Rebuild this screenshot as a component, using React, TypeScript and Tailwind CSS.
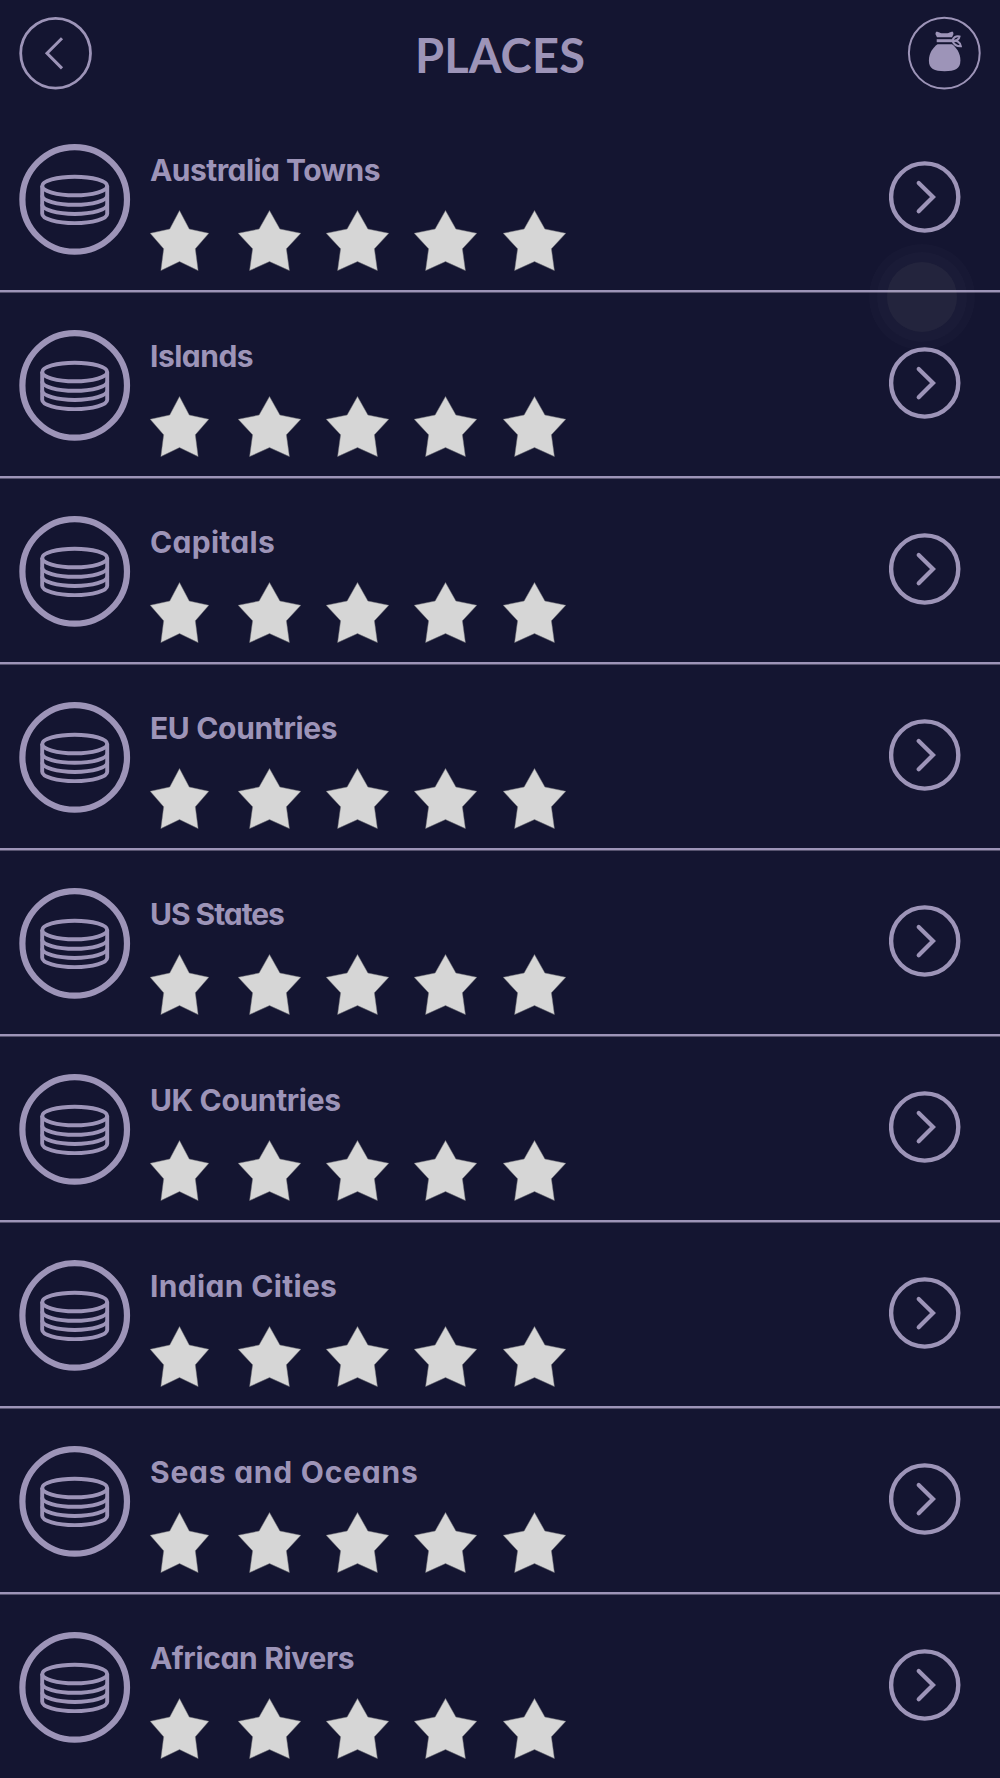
const places = [
  { name: "Australia Towns", spacing: "tracking-[-0.55px]" },
  { name: "Islands", spacing: "tracking-[-0.5px]" },
  { name: "Capitals", spacing: "tracking-[0.3px]" },
  { name: "EU Countries", spacing: "tracking-[-0.35px]" },
  { name: "US States", spacing: "tracking-[-1.05px]" },
  { name: "UK Countries", spacing: "tracking-[-0.35px]" },
  { name: "Indian Cities", spacing: "tracking-[0.33px]" },
  { name: "Seas and Oceans", spacing: "tracking-[0.77px]" },
  { name: "African Rivers", spacing: "tracking-[-0.35px]" },
];

function BackIcon() {
  return (
    <svg viewBox="0 0 74 74" className="size-[74px]" fill="none" stroke="currentColor">
      <circle cx="36.6" cy="37.2" r="34.9" strokeWidth="2.8" />
      <path d="M43 22.2 28 37.2 43 52.4" strokeWidth="3" />
    </svg>
  );
}

function BagIcon() {
  return (
    <svg viewBox="0 0 74 74" className="size-[74px]" fill="none" stroke="currentColor">
      <circle cx="37.3" cy="37.1" r="35.4" strokeWidth="2" />
      <g fill="currentColor" stroke="none">
        <path d="M29 15.8C31 15 32 17.300 37.500 17.300S44 15 46 15.800L46.500 18 45 21.200H30L28.400 18Z" />
        <path d="M29.700 23.200H45.800V26.200H29.700Z" />
        <path d="M30.500 28.200H45C49.500 31.500 53.400 37 53.400 44.500 53.400 53 48 55.200 37.600 55.200S21.900 53 21.900 44.500C21.900 37 26 31.500 30.500 28.200Z" />
      </g>
      <path
        d="M45.500 25C46 21.500 48.800 19.800 52.500 20.500 52 23.500 49.500 25 45.500 25ZM45.500 25C50 24.300 53.500 26 53.900 30.300 50 30.500 47 28.500 45.500 25Z"
        strokeWidth="2"
      />
    </svg>
  );
}

function CoinsIcon() {
  return (
    <svg viewBox="0 0 112 112" className="size-[112px]" fill="none" stroke="currentColor">
      <circle cx="55.700" cy="56.400" r="52.300" strokeWidth="6.200" />
      <g strokeWidth="3.900">
        <ellipse cx="55.700" cy="43" rx="32.500" ry="9.300" />
        <path d="M23.200 43V70.700A32.500 9.400 0 0 0 88.200 70.700V43" />
        <path d="M23.200 52.400A32.500 9.400 0 0 0 88.200 52.400M23.200 61.600A32.500 9.400 0 0 0 88.200 61.600" />
      </g>
    </svg>
  );
}

function Star({ className }: { className: string }) {
  return (
    <svg
      viewBox="0 0 63 61"
      preserveAspectRatio="none"
      className={className}
      fill="#d6d6d6"
      stroke="#77777c"
      strokeWidth="0.5"
    >
      <path d="M31.500 0.500 41.900 19 62.800 23.300 48.400 38.800 51.400 60.600 31.500 51.600 11.600 60.600 14.600 38.800 0.200 23.300 21.100 19Z" />
    </svg>
  );
}

function NextIcon() {
  return (
    <svg viewBox="0 0 72 72" className="size-[72px]" fill="none" stroke="currentColor">
      <circle cx="35.700" cy="36" r="33.600" strokeWidth="4.400" />
      <path d="M29.700 22 44 36 29.700 50.300" strokeWidth="4.200" strokeLinecap="round" />
    </svg>
  );
}

export default function App() {
  return (
    <main className="relative h-[1778px] w-[1000px] overflow-hidden bg-[#141531] font-['Inter',sans-serif] text-[#9d94b8] [font-feature-settings:'cv11']">
      <header className="flex h-[107px] items-start justify-between px-[19px] pt-4">
        <BackIcon />
        <h1 className="mt-[6px] font-['Lato',sans-serif] text-[47px] leading-[66px] font-bold tracking-[0.2px]">
          PLACES
        </h1>
        <BagIcon />
      </header>
      <ul>
        {places.map((place) => (
          <li key={place.name} className="h-[186px]">
            <div className="flex h-[183px] items-start">
              <div className="mt-9 ml-[19px]">
                <CoinsIcon />
              </div>
              <div className="ml-[19px] flex-1">
                <h2 className="mt-[43px] text-[30px] leading-[40px] font-bold whitespace-nowrap">
                  <span className={place.spacing}>{place.name}</span>
                </h2>
                <div className="mt-5 flex gap-[25.200px]">
                  <Star className="mr-[3.900px] h-[61px] w-[59px]" />
                  <Star className="h-[61px] w-[63px]" />
                  <Star className="h-[61px] w-[63px]" />
                  <Star className="h-[61px] w-[63px]" />
                  <Star className="h-[61px] w-[63px]" />
                </div>
              </div>
              <div className="mt-[54px] mr-[39px]">
                <NextIcon />
              </div>
            </div>
            <div className="h-[2px] bg-[#9d94b8]" />
            <div className="h-px bg-[#57536f]" />
          </li>
        ))}
      </ul>
      <div className="pointer-events-none absolute top-[244px] left-[869px] flex size-[106px] items-center justify-center rounded-full bg-white/[0.015]">
        <div className="flex size-[90px] items-center justify-center rounded-full bg-white/[0.015]">
          <div className="size-[70px] rounded-full bg-[#d6d6a8]/[0.05]" />
        </div>
      </div>
    </main>
  );
}
